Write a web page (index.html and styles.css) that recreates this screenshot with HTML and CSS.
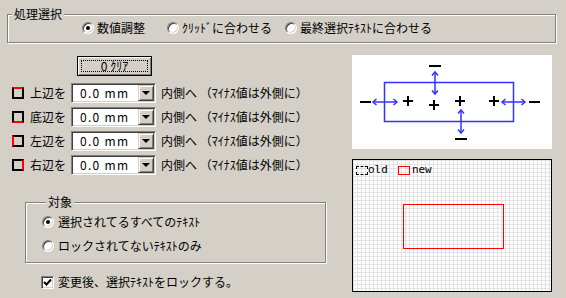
FILE: index.html
```html
<!DOCTYPE html>
<html lang="ja">
<head>
    <meta charset="UTF-8">
    <title>処理選択</title>
    <link rel="stylesheet" href="styles.css">
</head>
<body>
    <fieldset class="group mode">
        <legend>処理選択</legend>
        <div class="mode-row">
            <label class="opt opt-1"><span class="radio on"></span>数値調整</label>
            <label class="opt opt-2"><span class="radio"></span>ｸﾘｯﾄﾞに合わせる</label>
            <label class="opt"><span class="radio"></span>最終選択ﾃｷｽﾄに合わせる</label>
        </div>
    </fieldset>

    <div class="main">
        <div class="left">
            <button class="btn">0 ｸﾘｱ</button>

            <div class="edges">
                <div class="edge-row">
                    <span class="edge edge-top"></span>
                    <span class="edge-label">上辺を</span>
                    <div class="combo"><span class="combo-val">0.0 mm</span><span class="combo-btn"></span></div>
                    <span class="note">内側へ （ﾏｲﾅｽ値は外側に）</span>
                </div>
                <div class="edge-row">
                    <span class="edge edge-bottom"></span>
                    <span class="edge-label">底辺を</span>
                    <div class="combo"><span class="combo-val">0.0 mm</span><span class="combo-btn"></span></div>
                    <span class="note">内側へ （ﾏｲﾅｽ値は外側に）</span>
                </div>
                <div class="edge-row">
                    <span class="edge edge-left"></span>
                    <span class="edge-label">左辺を</span>
                    <div class="combo"><span class="combo-val">0.0 mm</span><span class="combo-btn"></span></div>
                    <span class="note">内側へ （ﾏｲﾅｽ値は外側に）</span>
                </div>
                <div class="edge-row">
                    <span class="edge edge-right"></span>
                    <span class="edge-label">右辺を</span>
                    <div class="combo"><span class="combo-val">0.0 mm</span><span class="combo-btn"></span></div>
                    <span class="note">内側へ （ﾏｲﾅｽ値は外側に）</span>
                </div>
            </div>

            <fieldset class="group target">
                <legend>対象</legend>
                <label class="opt"><span class="radio on"></span>選択されてるすべてのﾃｷｽﾄ</label>
                <label class="opt"><span class="radio"></span>ロックされてないﾃｷｽﾄのみ</label>
            </fieldset>

            <label class="check-row">
                <span class="check"><svg width="9" height="9" viewBox="0 0 9 9"><path d="M1 4 L3.5 6.5 L8 1.5" fill="none" stroke="#000" stroke-width="2"/></svg></span>
                変更後、選択ﾃｷｽﾄをロックする。
            </label>
        </div>

        <div class="right">
            <div class="diagram">
                <svg width="200" height="94" viewBox="0 0 200 94">
                    <g fill="none" stroke="#3333ff" stroke-width="1.5">
                        <rect x="32.5" y="27.5" width="129" height="39"/>
                        <!-- top -->
                        <line x1="83" y1="17" x2="83" y2="39"/>
                        <polyline points="80,20.5 83,17 86,20.5"/>
                        <polyline points="80,35.5 83,39 86,35.5"/>
                        <!-- bottom -->
                        <line x1="109" y1="55" x2="109" y2="78"/>
                        <polyline points="106,58.5 109,55 112,58.5"/>
                        <polyline points="106,74.5 109,78 112,74.5"/>
                        <!-- left -->
                        <line x1="21" y1="47" x2="45" y2="47"/>
                        <polyline points="24.5,44 21,47 24.5,50"/>
                        <polyline points="41.5,44 45,47 41.5,50"/>
                        <!-- right -->
                        <line x1="150" y1="47" x2="173" y2="47"/>
                        <polyline points="153.5,44 150,47 153.5,50"/>
                        <polyline points="169.5,44 173,47 169.5,50"/>
                    </g>
                    <g stroke="#000" stroke-width="2">
                        <line x1="77" y1="11" x2="89" y2="11"/>
                        <line x1="103" y1="84" x2="115" y2="84"/>
                        <line x1="8" y1="47" x2="19" y2="47"/>
                        <line x1="177" y1="47" x2="188" y2="47"/>
                        <line x1="51" y1="46" x2="61" y2="46"/><line x1="56" y1="41" x2="56" y2="51"/>
                        <line x1="77" y1="50" x2="87" y2="50"/><line x1="82" y1="45" x2="82" y2="55"/>
                        <line x1="103" y1="46" x2="113" y2="46"/><line x1="108" y1="41" x2="108" y2="51"/>
                        <line x1="137" y1="46" x2="147" y2="46"/><line x1="142" y1="41" x2="142" y2="51"/>
                    </g>
                </svg>
            </div>
            <div class="preview">
                <div class="legend-row">
                    <span class="old-box"></span><span class="legend-text">old</span>
                    <span class="new-box"></span><span class="legend-text new-text">new</span>
                </div>
                <div class="new-rect"></div>
            </div>
        </div>
    </div>
</body>
</html>
```

FILE: styles.css
```css
body {
    margin: 0;
    padding: 7px 10px 0 7px;
    width: 566px;
    height: 298px;
    box-sizing: border-box;
    overflow: hidden;
    background-color: #d4d0c8;
    color: #000;
    font-family: "Noto Sans CJK JP", sans-serif;
    font-size: 12px;
    line-height: 14px;
}

/* group boxes */
.group {
    margin: 0;
    padding: 0;
    min-width: 0;
    border: 1px solid #808080;
    box-shadow: inset 1px 1px 0 #fff, 1px 1px 0 #fff;
}
.group legend {
    margin-left: 4px;
    padding: 0 2px;
    line-height: 14px;
    background-color: #d4d0c8;
}
.mode {
    padding-bottom: 7px;
}
.mode-row {
    display: flex;
    align-items: center;
    height: 14px;
    padding-left: 74px;
}
.opt {
    display: flex;
    align-items: center;
    gap: 3px;
    white-space: nowrap;
}
.opt-1 {
    width: 85px;
}
.opt-2 {
    width: 118px;
}

/* radio / checkbox */
.radio {
    position: relative;
    width: 12px;
    height: 12px;
    box-sizing: border-box;
    border-radius: 50%;
    border: 1px solid;
    border-color: #808080 #fff #fff #808080;
    box-shadow: inset 1px 1px 0 #404040, inset -1px -1px 0 #d4d0c8;
    background-color: #fff;
    flex: none;
}
.radio.on::after {
    content: "";
    position: absolute;
    left: 3px;
    top: 3px;
    width: 4px;
    height: 4px;
    border-radius: 50%;
    background-color: #000;
}
.check {
    display: flex;
    align-items: center;
    justify-content: center;
    width: 13px;
    height: 13px;
    box-sizing: border-box;
    border: 1px solid;
    border-color: #808080 #fff #fff #808080;
    box-shadow: inset 1px 1px 0 #404040, inset -1px -1px 0 #d4d0c8;
    background-color: #fff;
}

.main {
    display: flex;
    margin-top: 12px;
}
.left {
    width: 345px;
}
.right {
    width: 200px;
}

.btn {
    display: block;
    margin: 1px 0 0 70px;
    width: 75px;
    height: 20px;
    padding: 0;
    font: inherit;
    background-color: #d4d0c8;
    border: 1px solid #000;
    box-shadow: inset 1px 1px 0 #fff, inset -1px -1px 0 #808080;
    outline: 1px dotted #000;
    outline-offset: -5px;
}

/* edge rows */
.edges {
    margin-top: 7px;
}
.edge-row {
    display: flex;
    align-items: center;
    height: 20px;
}
.edge-row + .edge-row {
    margin-top: 4px;
}
.edge {
    margin-left: 5px;
    width: 12px;
    height: 12px;
    box-sizing: border-box;
    border: 2px solid #000;
}
.edge-top { border-top-color: #f00; }
.edge-bottom { border-bottom-color: #f00; }
.edge-left { border-left-color: #f00; }
.edge-right { border-right-color: #f00; }
.edge-label {
    margin-left: 6px;
}
.combo {
    display: flex;
    margin-left: 5px;
    width: 85px;
    height: 20px;
    box-sizing: border-box;
    border: 1px solid;
    border-color: #808080 #fff #fff #808080;
    box-shadow: inset 1px 1px 0 #404040, inset -1px -1px 0 #d4d0c8;
    background-color: #fff;
    padding: 1px;
}
.combo-val {
    flex: 1;
    padding-left: 7px;
    line-height: 16px;
    letter-spacing: 1.3px;
}
.combo-btn {
    display: flex;
    align-items: center;
    justify-content: center;
    width: 16px;
    height: 16px;
    box-sizing: border-box;
    background-color: #d4d0c8;
    border: 1px solid;
    border-color: #d4d0c8 #404040 #404040 #d4d0c8;
    box-shadow: inset 1px 1px 0 #fff, inset -1px -1px 0 #808080;
}
.combo-btn::after {
    content: "";
    border-top: 4px solid #000;
    border-left: 4px solid transparent;
    border-right: 4px solid transparent;
}
.note {
    margin-left: 5px;
    white-space: nowrap;
}

/* target group */
.target {
    margin: 20px 0 0 18px;
    width: 301px;
    box-sizing: border-box;
    padding: 6px 0 9px 16px;
}
.target .opt {
    gap: 4px;
}
.target .opt + .opt {
    margin-top: 10px;
}
.check-row {
    display: flex;
    align-items: center;
    gap: 4px;
    margin: 12px 0 0 34px;
}

/* right panels */
.diagram {
    height: 94px;
    background-color: #fff;
}
.diagram svg {
    display: block;
}
.preview {
    margin-top: 10px;
    height: 133px;
    box-sizing: border-box;
    border: 1px solid #000;
    background-color: #fff;
    background-image:
        linear-gradient(to right, #e2e2e2 1px, transparent 1px),
        linear-gradient(to bottom, #e2e2e2 1px, transparent 1px);
    background-size: 4px 4px;
}
.legend-row {
    display: flex;
    align-items: center;
    padding: 3px 0 0 3px;
    height: 14px;
}
.old-box {
    width: 12px;
    height: 9px;
    box-sizing: border-box;
    border: 1px dashed #000;
}
.new-box {
    margin-left: 10px;
    width: 12px;
    height: 9px;
    box-sizing: border-box;
    border: 1px solid #f00;
}
.legend-text {
    font-family: "DejaVu Sans Mono", monospace;
    font-size: 11px;
    line-height: 14px;
}
.new-text {
    margin-left: 2px;
}
.new-rect {
    margin: 27px 0 0 50px;
    width: 101px;
    height: 45px;
    box-sizing: border-box;
    border: 1px solid #f00;
}
```
